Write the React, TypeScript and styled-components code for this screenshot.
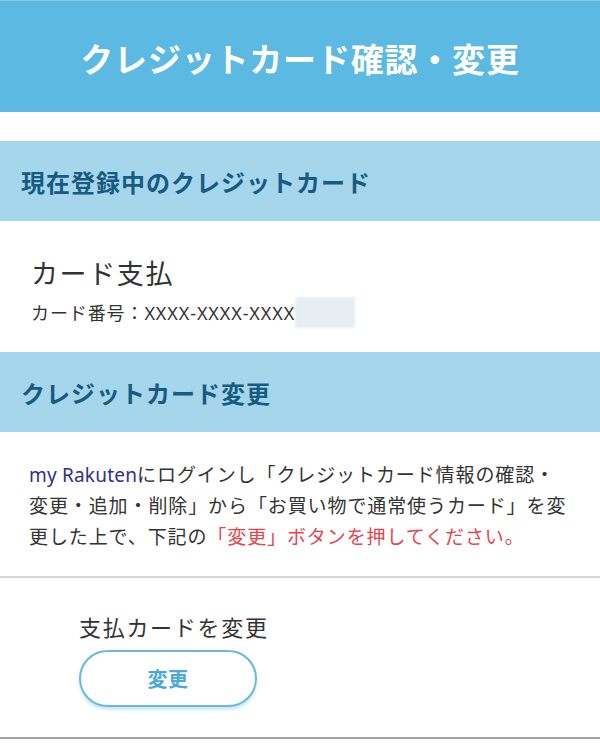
import styled, { createGlobalStyle } from "styled-components";

const GlobalStyle = createGlobalStyle`
  body {
    margin: 0;
    background: #fff;
    font-family: "Noto Sans", "Noto Sans CJK JP", sans-serif;
    color: #333;
  }
`;

export default function App() {
  return (
    <>
      <GlobalStyle />
      <Page>
        <Header>
          <Title>クレジットカード確認・変更</Title>
        </Header>

        <SectionHead $first>現在登録中のクレジットカード</SectionHead>
        <CardInfo>
          <CardName>カード支払</CardName>
          <CardNumber>
            カード番号：XXXX-XXXX-XXXX
            <Masked />
          </CardNumber>
        </CardInfo>

        <SectionHead>クレジットカード変更</SectionHead>
        <Notice>
          <LinkText>my Rakuten</LinkText>にログインし「クレジットカード情報の確認・
          <br />
          変更・追加・削除」から「お買い物で通常使うカード」を変
          <br />
          更した上で、下記の<Alert>「変更」ボタンを押してください。</Alert>
        </Notice>

        <ChangeBlock>
          <ChangeLabel>支払カードを変更</ChangeLabel>
          <ChangeButton type="button">変更</ChangeButton>
        </ChangeBlock>
      </Page>
    </>
  );
}

const Page = styled.div`
  width: 600px;
  min-height: 753px;
  background: #fff;
`;

const Header = styled.header`
  height: 112px;
  display: flex;
  align-items: center;
  justify-content: center;
  background-color: #5bb9e2;
  border-top: 1px solid #86cbea;
  box-sizing: border-box;
`;

const Title = styled.h1`
  margin: 0;
  padding-top: 2px;
  font-family: "Noto Sans CJK JP", sans-serif;
  font-size: 33px;
  font-weight: 700;
  letter-spacing: 0.8px;
  color: #fff;
`;

const SectionHead = styled.h2<{ $first?: boolean }>`
  margin: ${(p) => (p.$first ? "29px 0 0" : "0")};
  height: 80px;
  display: flex;
  align-items: center;
  padding-left: 21px;
  background-color: #a6d6ec;
  font-family: "Noto Sans CJK JP", sans-serif;
  font-size: 24px;
  font-weight: 700;
  letter-spacing: 1px;
  color: #175a82;
`;

const CardInfo = styled.div`
  height: 131px;
  box-sizing: border-box;
  padding: 35px 0 0 31px;
  display: flex;
  flex-direction: column;
`;

const CardName = styled.div`
  font-family: "Noto Sans CJK JP", sans-serif;
  font-size: 27px;
  line-height: 34px;
  letter-spacing: 1.6px;
  color: #333;
`;

const CardNumber = styled.div`
  margin-top: 7px;
  display: flex;
  align-items: center;
  font-size: 18px;
  line-height: 26px;
  letter-spacing: 0.9px;
  color: #333;
`;

const Masked = styled.span`
  display: inline-block;
  width: 60px;
  height: 31px;
  background: #e7eef1;
  filter: blur(1px);
`;

const Notice = styled.p`
  margin: 0;
  padding: 28px 0 23px 29px;
  font-size: 19px;
  line-height: 31px;
  letter-spacing: 0.9px;
  color: #333;
  border-bottom: 2px solid #d6d6d6;
`;

const LinkText = styled.span`
  color: #2e3090;
  letter-spacing: 0.2px;
`;

const Alert = styled.span`
  color: #e8434d;
`;

const ChangeBlock = styled.div`
  padding: 33px 0 30px 79px;
  display: flex;
  flex-direction: column;
  align-items: flex-start;
  gap: 9px;
  border-bottom: 2px solid #a2a2a2;
`;

const ChangeLabel = styled.div`
  font-family: "Noto Sans CJK JP", sans-serif;
  font-size: 22px;
  line-height: 30px;
  letter-spacing: 1.7px;
  color: #333;
`;

const ChangeButton = styled.button`
  width: 178px;
  height: 57px;
  border: 2px solid #6cb9dd;
  border-radius: 30px;
  background: #fff;
  box-shadow: 0 3px 3px rgba(91, 185, 226, 0.3);
  font-family: "Noto Sans CJK JP", sans-serif;
  font-size: 20px;
  font-weight: 700;
  letter-spacing: 0.5px;
  color: #4aa9da;
  cursor: pointer;
`;
